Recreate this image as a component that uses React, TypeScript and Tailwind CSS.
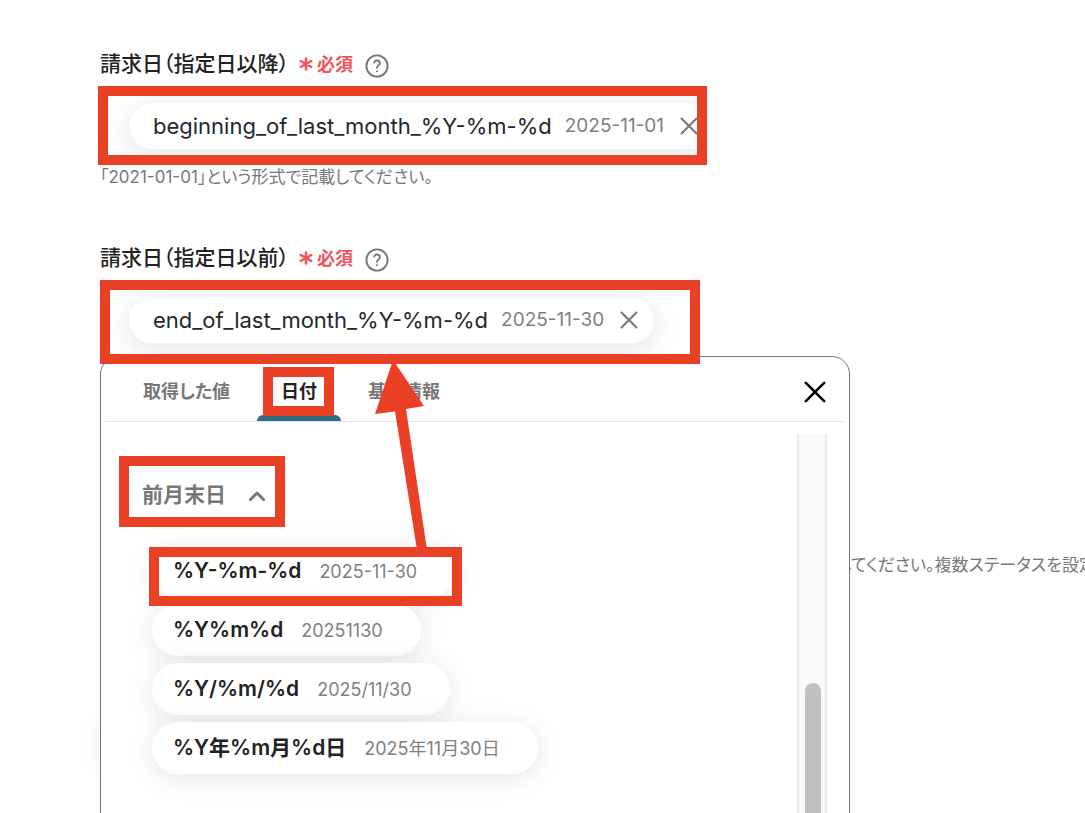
import React, { useState } from 'react';

interface DateFormat {
    format: string;
    sample: string;
}

const dateFormats: DateFormat[] = [
    { format: '%Y-%m-%d', sample: '2025-11-30' },
    { format: '%Y%m%d', sample: '20251130' },
    { format: '%Y/%m/%d', sample: '2025/11/30' },
    { format: '%Y年%m月%d日', sample: '2025年11月30日' },
];

const tabs = ['取得した値', '日付', '基本情報'];

const CrossIcon: React.FC<{ className: string; strokeWidth: number }> = ({ className, strokeWidth }) => (
    <svg viewBox="0 0 24 24" className={className} fill="none" stroke="currentColor" strokeWidth={strokeWidth} strokeLinecap="round" aria-hidden="true">
        <path d="M2 2 22 22M22 2 2 22" />
    </svg>
);

const HelpIcon: React.FC = () => (
    <svg viewBox="0 0 24 24" className="w-6 h-6" fill="none" stroke="currentColor" strokeWidth="1.9" strokeLinecap="round" strokeLinejoin="round" aria-hidden="true">
        <circle cx="12" cy="12" r="10.6" />
        <path d="M9.200 8.600a2.900 2.900 0 0 1 5.700.6c0 2-2.900 2.400-2.900 4.600" />
        <circle cx="12" cy="17.200" r="1" fill="currentColor" stroke="none" />
    </svg>
);

const AsteriskIcon: React.FC = () => (
    <svg viewBox="0 0 14 14" className="w-3.5 h-3.5" stroke="currentColor" strokeWidth="2.5" strokeLinecap="round" aria-hidden="true">
        <path d="M7 1.400v11.200M1.700 4l10.600 6M12.300 4l-10.600 6" />
    </svg>
);

// Red frame laid over the part that should be pointed out
const Highlight: React.FC<{ className: string }> = ({ className }) => (
    <div className={`absolute z-20 border-10 border-[#ea4025] pointer-events-none ${className}`} />
);

const FieldLabel: React.FC<{ id: string; text: string }> = ({ id, text }) => (
    <div className="flex items-center h-8">
        <span id={id} className="text-[21px] leading-8 font-medium text-[#222]">{text}</span>
        <span className="flex items-center gap-1 ml-2.5 text-[18px] font-semibold text-[#f0555d]">
            <AsteriskIcon />
            必須
        </span>
        <button type="button" aria-label="ヘルプ" className="ml-3 mt-1 text-[#777]">
            <HelpIcon />
        </button>
    </div>
);

const ValuePill: React.FC<{ value: string; sample: string }> = ({ value, sample }) => (
    <div className="flex items-center shrink-0 w-max h-12 pl-6 pr-4 rounded-full bg-white border border-[#f3f3f3] shadow-[0_6px_28px_rgba(0,0,0,0.10)] whitespace-nowrap">
        <span className="text-[22px] text-[#24272b]">{value}</span>
        <span className="ml-[13px] text-[19px] text-[#808080]">{sample}</span>
        <button type="button" aria-label="削除" className="ml-4 text-[#777]">
            <CrossIcon className="w-[18px] h-[18px]" strokeWidth={2.7} />
        </button>
    </div>
);

const App: React.FC = () => {
    const [activeTab, setActiveTab] = useState<string>('日付');
    const [isOpen, setIsOpen] = useState<boolean>(true);

    return (
        <main className="h-screen overflow-hidden bg-white pl-[100px] pt-12 font-['Inter','Noto_Sans_CJK_JP',sans-serif] [font-feature-settings:'palt']">
            <section>
                <FieldLabel id="from-label" text="請求日（指定日以降）" />
                <div className="relative max-w-[600px] mt-1.5">
                    <div role="group" aria-labelledby="from-label" className="h-[79px] pt-4 pl-7 overflow-hidden">
                        <ValuePill value="beginning_of_last_month_%Y-%m-%d" sample="2025-11-01" />
                    </div>
                    <Highlight className="inset-y-0 -left-0.5 -right-[7px]" />
                </div>
                <p className="text-[17px] leading-6 text-[#777]">「2021-01-01」という形式で記載してください。</p>
            </section>

            <section className="mt-[53px]">
                <FieldLabel id="to-label" text="請求日（指定日以前）" />
                <div className="relative mt-1.5">
                    <div className="relative max-w-[600px]">
                        <div role="group" aria-labelledby="to-label" className="h-[76px] pt-4 pl-7 overflow-hidden">
                            <ValuePill value="end_of_last_month_%Y-%m-%d" sample="2025-11-30" />
                        </div>
                        <Highlight className="inset-x-0 top-0 -bottom-2" />
                    </div>

                    <div className="absolute left-0 top-full z-10 w-[750px] h-[560px] px-1 bg-white border border-[#777] rounded-[18px]">
                        <div className="flex items-start justify-between h-[65px] pl-3.5 pr-[19px] border-b border-[#e2e2e2]">
                            <div role="tablist" className="flex gap-[3px] h-full">
                                {tabs.map((tab) => (
                                    <div key={tab} className="relative flex">
                                        <button
                                            type="button"
                                            role="tab"
                                            aria-selected={activeTab === tab}
                                            onClick={() => setActiveTab(tab)}
                                            className={`relative flex justify-center px-6 pt-[21px] text-[18px] leading-7 font-semibold ${
                                                activeTab === tab ? 'text-[#222]' : 'text-[#777]'
                                            }`}
                                        >
                                            {tab}
                                            {activeTab === tab && (
                                                <span className="absolute inset-x-0 bottom-0 h-1.5 rounded-t-md bg-[#316c86]" />
                                            )}
                                        </button>
                                        {tab === '日付' && <Highlight className="left-1.5 right-[7px] top-2.5 h-[49px]" />}
                                    </div>
                                ))}
                            </div>
                            <button type="button" aria-label="閉じる" className="mt-6 text-black">
                                <CrossIcon className="w-[22px] h-[22px]" strokeWidth={2.8} />
                            </button>
                        </div>

                        <div className="flex justify-between h-[480px] mt-3 pr-[18px]">
                            <div className="pl-[37px] pt-[37px]">
                                <div className="relative w-max">
                                    <button
                                        type="button"
                                        aria-expanded={isOpen}
                                        onClick={() => setIsOpen(!isOpen)}
                                        className="flex items-center gap-[22px] h-12 text-[21px] font-semibold text-[#777]"
                                    >
                                        前月末日
                                        <svg viewBox="0 0 18 12" className="w-[18px] h-3 mt-0.5" fill="none" stroke="currentColor" strokeWidth="3" strokeLinecap="round" strokeLinejoin="round" aria-hidden="true">
                                            <path d="M2.500 9.500 9 3l6.500 6.500" />
                                        </svg>
                                    </button>
                                    <Highlight className="-left-[23px] -right-[19px] -top-[15px] h-[71px]" />
                                </div>
                                {isOpen && (
                                    <ul className="flex flex-col items-start gap-[7px] mt-[26px] ml-2.5">
                                        {dateFormats.map((item, index) => (
                                            <li key={item.format} className="relative">
                                                <button
                                                    type="button"
                                                    className="flex items-center gap-[18px] h-[52px] pl-[21px] pr-[38px] rounded-full bg-white shadow-[0_4px_28px_rgba(0,0,0,0.10)] whitespace-nowrap"
                                                >
                                                    <span className="text-[21px] font-semibold text-[#222]">{item.format}</span>
                                                    <span className="text-[18px] text-[#808080]">{item.sample}</span>
                                                </button>
                                                {index === 0 && <Highlight className="-left-[3px] top-0.5 w-[313px] h-[59px]" />}
                                            </li>
                                        ))}
                                    </ul>
                                )}
                            </div>
                            <div className="w-[30px] px-1.5 pt-[249px] bg-[#fafafa] border-x-2 border-[#e9e9e9]">
                                <div className="w-4 mx-auto h-full rounded-full bg-[#c1c1c1]" />
                            </div>
                        </div>

                        {/* arrow from the chosen format up to the field */}
                        <svg viewBox="0 0 60 190" className="absolute left-[270px] top-[3px] z-20 w-[60px] h-[190px] pointer-events-none" aria-hidden="true">
                            <path d="M22 0 53 46 35 49 56 190H46L24 51.500 4 54Z" fill="#ea4025" />
                        </svg>
                    </div>
                </div>
            </section>

            <section>
                <p className="mt-[197px] ml-[737px] text-[17px] leading-6 text-[#777] whitespace-nowrap">してください。複数ステータスを設定</p>
                <div className="mt-[140px] w-[200px] h-12 rounded-full bg-white shadow-[0_4px_24px_rgba(49,108,134,0.12)]" />
            </section>
        </main>
    );
};

export default App;
